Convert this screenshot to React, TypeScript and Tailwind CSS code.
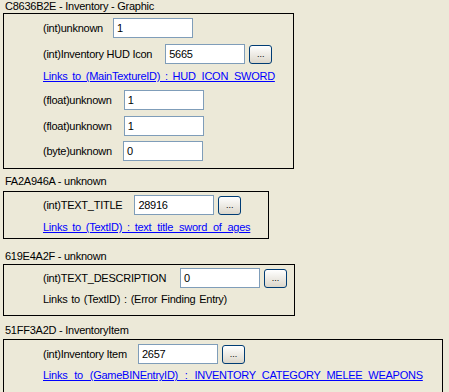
import React from 'react';

const font = { fontFamily: '"Liberation Sans", Arial, sans-serif' };

const TextBox = ({ value, className = '' }: { value: string; className?: string }) => (
  <div className={`h-[20px] w-[80px] shrink-0 border border-[#7F9DB9] bg-white pl-[3px] text-[11px] leading-[18px] text-black ${className}`}>
    {value}
  </div>
);

const DotsButton = () => (
  <div className="ml-[4px] flex h-[19px] w-[23px] shrink-0 items-end justify-center rounded-[3px] border border-[#003C74] bg-gradient-to-b from-white to-[#DCD7CB] pb-[4px] text-[9px] leading-none tracking-normal text-black">
    ...
  </div>
);

const Label = ({ text, className = '' }: { text: string; className?: string }) => (
  <span className={`whitespace-nowrap text-[11px] leading-[13px] text-black ${className}`}>{text}</span>
);

const Field = ({ label, value, gap, button, className = '' }: { label: string; value: string; gap: string; button?: boolean; className?: string }) => (
  <div className={`flex h-[20px] items-center ${className}`}>
    <Label text={label} className={gap} />
    <TextBox value={value} />
    {button && <DotsButton />}
  </div>
);

const LinkLine = ({ text, className = '' }: { text: string; className?: string }) => (
  <div className={`whitespace-nowrap text-[11px] leading-[13px] text-[#0000FF] underline underline-offset-[1px] ${className}`}>{text}</div>
);

const Header = ({ text, className = '' }: { text: string; className?: string }) => (
  <div className={`pl-[2px] text-[11px] leading-[13px] text-black ${className}`}>{text}</div>
);

export default function App() {
  return (
    <div className="h-[392px] w-[449px] overflow-hidden bg-[#ECE9D8] pl-[3px] tracking-[-0.25px]" style={font}>
      <Header text="C8636B2E - Inventory - Graphic" />
      <div className="flex w-[291px] flex-col border border-black pb-[7px] pl-[39px] pt-[4px]">
        <Field label="(int)unknown" value="1" gap="mr-[10px]" />
        <Field label="(int)Inventory HUD Icon" value="5665" gap="mr-[13px]" button className="mt-[6px]" />
        <LinkLine text="Links to (MainTextureID) : HUD_ICON_SWORD" className="mt-[6px] [word-spacing:2px]" />
        <Field label="(float)unknown" value="1" gap="mr-[12px]" className="mt-[7px]" />
        <Field label="(float)unknown" value="1" gap="mr-[12px]" className="mt-[6px]" />
        <Field label="(byte)unknown" value="0" gap="mr-[11px]" className="mt-[5px]" />
      </div>

      <Header text="FA2A946A - unknown" className="mb-[3px] mt-[6px]" />
      <div className="flex w-[266px] flex-col border border-black pb-[4px] pl-[39px] pt-[3px]">
        <Field label="(int)TEXT_TITLE" value="28916" gap="mr-[12px]" button />
        <LinkLine text="Links to (TextID) : text_title_sword_of_ages" className="mt-[6px] [word-spacing:2px]" />
      </div>

      <Header text="619E4A2F - unknown" className="mb-[1px] mt-[11px]" />
      <div className="flex w-[292px] flex-col border border-black pb-[9px] pl-[39px] pt-[3px]">
        <Field label="(int)TEXT_DESCRIPTION" value="0" gap="mr-[14px]" button />
        <div className="mt-[5px] whitespace-nowrap text-[11px] leading-[13px] text-black [word-spacing:1px]">Links to (TextID) : (Error Finding Entry)</div>
      </div>

      <Header text="51FF3A2D - InventoryItem" className="mb-[2px] mt-[8px]" />
      <div className="flex w-[440px] flex-col border border-black pb-[10px] pl-[39px] pt-[4px]">
        <Field label="(int)Inventory Item" value="2657" gap="mr-[11px]" button />
        <LinkLine text="Links to (GameBINEntryID) : INVENTORY_CATEGORY_MELEE_WEAPONS" className="mt-[5px] [word-spacing:4px]" />
      </div>
    </div>
  );
}
